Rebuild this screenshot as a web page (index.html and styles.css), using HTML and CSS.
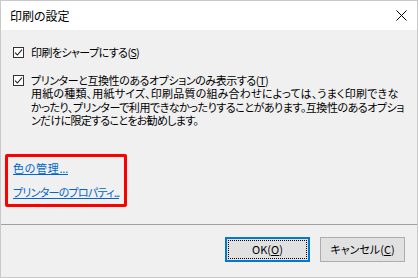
FILE: index.html
```html
<!DOCTYPE html>
<html lang="ja">
<head>
<meta charset="utf-8">
<link rel="stylesheet" href="styles.css">
</head>
<body>
<div class="window">
  <div class="titlebar">
    <span class="title">印刷の設定</span>
    <svg class="close" width="11" height="11" viewBox="0 0 11 11"><path d="M0.5 0.5 L10.5 10.5 M10.5 0.5 L0.5 10.5" stroke="#000" stroke-width="1" fill="none"/></svg>
  </div>
  <div class="content">
    <div class="options">
      <div class="check-row">
        <span class="checkbox"><svg width="9" height="9" viewBox="0 0 9 9"><path d="M1 4.6 L3.4 7 L8 1.6" stroke="#222" stroke-width="1.1" fill="none"/></svg></span>
        <div class="check-text">
          <span class="line w-c1">印刷をシャープにする(<u>S</u>)</span>
        </div>
      </div>
      <div class="check-row second">
        <span class="checkbox"><svg width="9" height="9" viewBox="0 0 9 9"><path d="M1 4.6 L3.4 7 L8 1.6" stroke="#222" stroke-width="1.1" fill="none"/></svg></span>
        <div class="check-text">
          <span class="line w-label">プリンターと互換性のあるオプションのみ表示する(<u>T</u>)</span>
          <span class="line w-l1">用紙の種類、用紙サイズ、印刷品質の組み合わせによっては、うまく印刷できな</span>
          <span class="line w-l2">かったり、プリンターで利用できなかったりすることがあります。互換性のあるオプショ</span>
          <span class="line w-l3">ンだけに限定することをお勧めします。</span>
        </div>
      </div>
    </div>
    <div class="links">
      <a class="link w-a1" href="#">色の管理...</a>
      <a class="link w-a2" href="#">プリンターのプロパティ...</a>
    </div>
    <div class="separator"></div>
    <div class="buttons">
      <button class="btn default"><span class="focus">OK(<u>O</u>)</span></button>
      <button class="btn">キャンセル(<u>C</u>)</button>
    </div>
  </div>
</div>
</body>
</html>
```
FILE: styles.css
```css
html, body {
  margin: 0;
  padding: 0;
  background: #ffffff;
}
body {
  font-family: "Noto Sans CJK JP", "Noto Sans", sans-serif;
  font-size: 11px;
  font-feature-settings: "palt";
  color: #000;
}
.window {
  width: 418px;
  height: 278px;
  box-sizing: border-box;
  border: 1px solid #c9c9c9;
  display: flex;
  flex-direction: column;
  background: #f0f0f0;
}
.titlebar {
  height: 29px;
  background: #fff;
  display: flex;
  align-items: center;
  justify-content: space-between;
  padding: 0 10px 0 9px;
  flex: none;
}
.title {
  font-size: 12px;
  line-height: 14px;
}
.close {
  display: block;
}
.content {
  flex: 1;
  display: flex;
  flex-direction: column;
}
.options {
  padding: 16px 0 0 12px;
  display: flex;
  flex-direction: column;
  gap: 14px;
}
.check-row {
  display: flex;
  align-items: flex-start;
  gap: 7px;
}
.checkbox {
  width: 11px;
  height: 11px;
  border: 1px solid #333;
  background: #fff;
  box-sizing: border-box;
  display: flex;
  align-items: center;
  justify-content: center;
  margin-top: 1px;
  flex: none;
}
.checkbox svg {
  display: block;
}
.check-text {
  line-height: 13.6px;
  white-space: nowrap;
  display: flex;
  flex-direction: column;
}
.line {
  display: block;
  text-align: justify;
  text-align-last: justify;
  text-justify: inter-character;
}
.w-c1 { width: 108px; letter-spacing: -0.8px; }
.w-label { width: 237px; letter-spacing: -0.6px; }
.w-l1 { width: 367px; letter-spacing: -0.2px; }
.w-l2 { width: 372px; letter-spacing: -1.4px; }
.w-l3 { width: 167px; letter-spacing: -0.9px; }
u {
  text-underline-offset: 1px;
}
.links {
  margin: 26px 0 0 4px;
  width: 122px;
  box-sizing: border-box;
  border: 3px solid #ff0000;
  border-radius: 2px;
  padding: 4px 0 5px 5px;
  display: flex;
  flex-direction: column;
  align-items: flex-start;
  gap: 10px;
}
.link {
  color: #0066cc;
  text-decoration: underline;
  line-height: 14px;
  white-space: nowrap;
  display: block;
  text-align: justify;
  text-align-last: justify;
  text-justify: inter-character;
}
.w-a1 { width: 55px; letter-spacing: -0.2px; }
.w-a2 { width: 106px; letter-spacing: -1.3px; }
.separator {
  margin-top: 17px;
  height: 1px;
  background: #a0a0a0;
}
.buttons {
  display: flex;
  justify-content: flex-end;
  gap: 10px;
  padding: 12px 12px 0 0;
}
.btn {
  width: 85px;
  height: 25px;
  box-sizing: border-box;
  border: 1px solid #adadad;
  background: #e1e1e1;
  font-family: inherit;
  font-size: 11px;
  font-feature-settings: "palt";
  color: #000;
  padding: 0;
  display: flex;
  align-items: center;
  justify-content: center;
}
.btn.default {
  border: 2px solid #0078d7;
  padding: 1px;
}
.focus {
  width: 100%;
  height: 100%;
  box-sizing: border-box;
  border: 1px dotted #000;
  display: flex;
  align-items: center;
  justify-content: center;
}
```
